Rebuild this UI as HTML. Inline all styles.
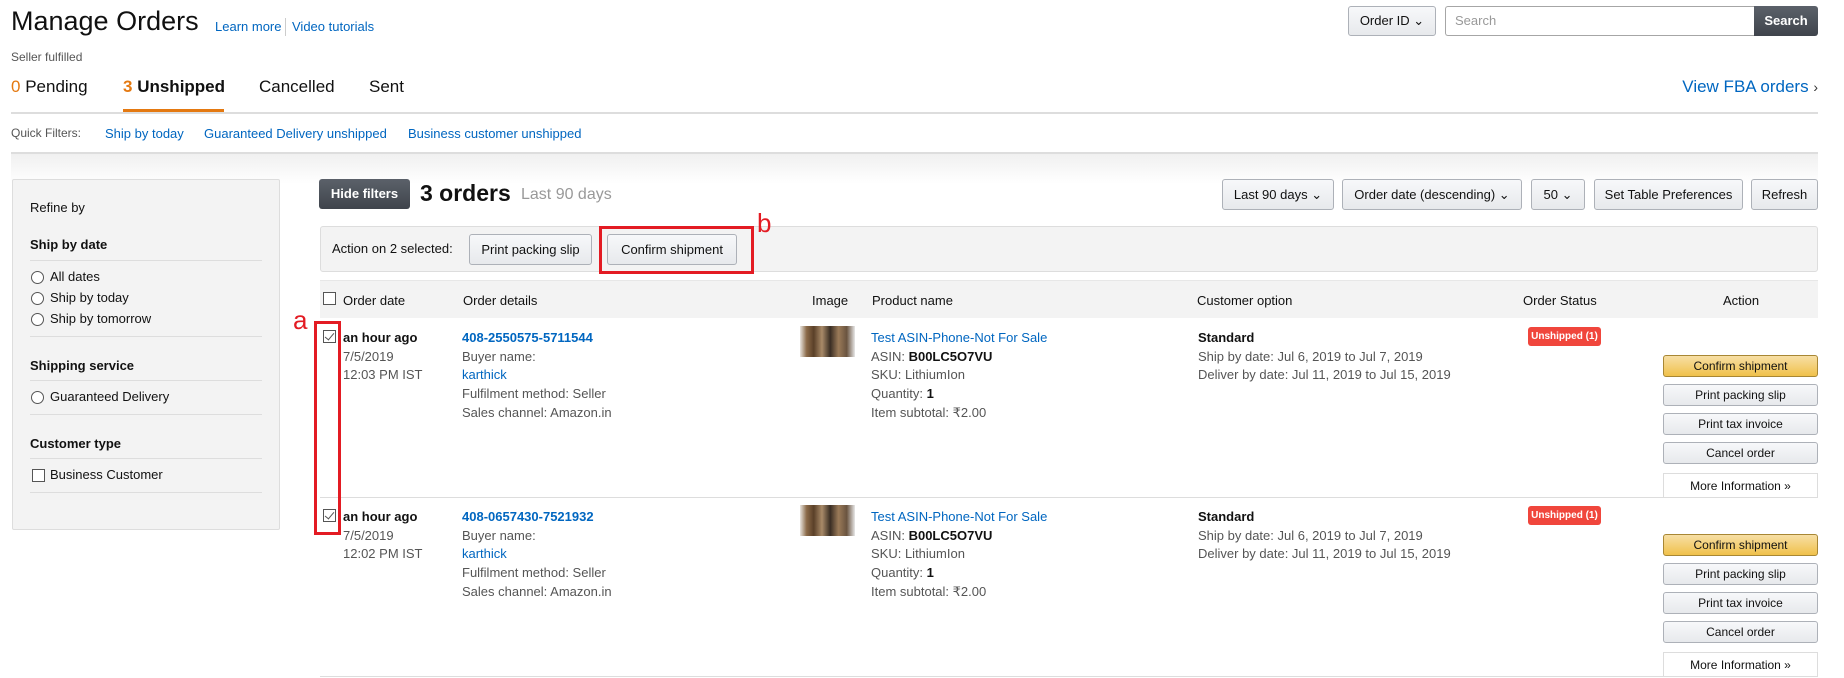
<!DOCTYPE html>
<html><head><meta charset="utf-8"><style>
*{margin:0;padding:0;box-sizing:border-box}
body{width:1844px;height:678px;overflow:hidden;background:#fff;font-family:"Liberation Sans",sans-serif;color:#111;position:relative;font-size:13px}
.a{position:absolute;white-space:nowrap}
.bl{color:#0066c0}
.g{color:#555}
.btn{position:absolute;border:1px solid #adb1b8;border-radius:3px;background:linear-gradient(#f7f8fa,#e7e9ec);font-size:13px;text-align:center;color:#111;white-space:nowrap}
.ln{position:absolute;height:1px;background:#ddd}
.rad{position:absolute;width:13px;height:13px;border:1px solid #555;border-radius:50%;background:#fff}
.cb{position:absolute;width:13px;height:13px;border:1px solid #555;background:#fff}
.cb.c::after{content:"";position:absolute;left:3px;top:0px;width:4px;height:8px;border:solid #555;border-width:0 1.5px 1.5px 0;transform:rotate(40deg)}
.y{background:linear-gradient(#f7dfa5,#f0c14b);border-color:#a88734}
.badge{position:absolute;background:#f0463c;color:#fff;font-weight:bold;font-size:10px;border-radius:3px;text-align:center;line-height:19px}
.thumb{position:absolute;width:55px;height:31px;background:linear-gradient(90deg,#e8e4de 0,#8b6a48 12%,#5a4028 25%,#a88a68 40%,#3a2e24 55%,#9a7a58 70%,#6a5440 85%,#e8e8e8 100%)}
.r{line-height:18.7px}
</style></head><body>
<div class="a" style="left:11px;top:6px;font-size:27px;color:#111">Manage Orders</div>
<div class="a bl" style="left:215px;top:19px;font-size:13px">Learn more</div>
<div style="position:absolute;left:285px;top:18px;width:1px;height:18px;background:#ccc"></div>
<div class="a bl" style="left:292px;top:19px;font-size:13px">Video tutorials</div>
<div class="a g" style="left:11px;top:50px;font-size:12px">Seller fulfilled</div>

<div class="btn" style="left:1348px;top:6px;width:88px;height:30px;line-height:28px">Order ID &#8964;</div>
<div style="position:absolute;left:1445px;top:6px;width:310px;height:30px;border:1px solid #a6a6a6;border-right:none;border-radius:3px 0 0 3px"></div>
<div class="a" style="left:1455px;top:13px;color:#999;font-size:13px">Search</div>
<div class="a" style="left:1754px;top:6px;width:64px;height:30px;background:linear-gradient(#5b616a,#3f444c);color:#fff;font-weight:bold;text-align:center;line-height:30px;border-radius:0 3px 3px 0">Search</div>

<div class="a" style="left:11px;top:77px;font-size:17px"><span style="color:#e47911">0</span> Pending</div>
<div class="a" style="left:123px;top:77px;font-size:17px;font-weight:bold"><span style="color:#e47911">3</span> Unshipped</div>
<div style="position:absolute;left:123px;top:109px;width:101px;height:3px;background:#e47911"></div>
<div class="a" style="left:259px;top:77px;font-size:17px">Cancelled</div>
<div class="a" style="left:369px;top:77px;font-size:17px">Sent</div>
<div class="a bl" style="right:26px;top:77px;font-size:17px">View FBA orders <span style="font-size:14px;color:#333">&#8250;</span></div>
<div style="position:absolute;left:11px;top:112px;width:1807px;height:2px;background:#ddd"></div>

<div class="a g" style="left:11px;top:126px;font-size:12px">Quick Filters:</div>
<div class="a bl" style="left:105px;top:126px;font-size:13px">Ship by today</div>
<div class="a bl" style="left:204px;top:126px;font-size:13px">Guaranteed Delivery unshipped</div>
<div class="a bl" style="left:408px;top:126px;font-size:13px">Business customer unshipped</div>
<div style="position:absolute;left:11px;top:152px;width:1807px;height:2px;background:#ddd"></div>
<div style="position:absolute;left:11px;top:154px;width:1807px;height:30px;background:linear-gradient(#f0f0f0,#fff)"></div>

<div style="position:absolute;left:12px;top:179px;width:268px;height:351px;background:#f3f3f3;border:1px solid #ddd;border-radius:2px"></div>
<div class="a" style="left:30px;top:200px;font-size:13px">Refine by</div>
<div class="a" style="left:30px;top:237px;font-weight:bold">Ship by date</div>
<div class="ln" style="left:30px;top:260px;width:232px"></div>
<div class="rad" style="left:31px;top:271px"></div><div class="a" style="left:50px;top:269px">All dates</div>
<div class="rad" style="left:31px;top:292px"></div><div class="a" style="left:50px;top:290px">Ship by today</div>
<div class="rad" style="left:31px;top:313px"></div><div class="a" style="left:50px;top:311px">Ship by tomorrow</div>
<div class="ln" style="left:30px;top:336px;width:232px"></div>
<div class="a" style="left:30px;top:358px;font-weight:bold">Shipping service</div>
<div class="ln" style="left:30px;top:380px;width:232px"></div>
<div class="rad" style="left:31px;top:391px"></div><div class="a" style="left:50px;top:389px">Guaranteed Delivery</div>
<div class="ln" style="left:30px;top:414px;width:232px"></div>
<div class="a" style="left:30px;top:436px;font-weight:bold">Customer type</div>
<div class="ln" style="left:30px;top:458px;width:232px"></div>
<div class="cb" style="left:32px;top:469px"></div><div class="a" style="left:50px;top:467px">Business Customer</div>
<div class="ln" style="left:30px;top:492px;width:232px"></div>

<div class="a" style="left:319px;top:179px;width:91px;height:30px;background:linear-gradient(#5b616a,#3f444c);border-radius:3px;color:#fff;font-weight:bold;text-align:center;line-height:30px;font-size:13px">Hide filters</div>
<div class="a" style="left:420px;top:180px;font-size:23px;font-weight:bold">3 orders</div>
<div class="a" style="left:521px;top:186px;font-size:16px;color:#999">Last 90 days</div>

<div class="btn" style="left:1222px;top:179px;width:112px;height:31px;line-height:29px">Last 90 days &#8964;</div>
<div class="btn" style="left:1342px;top:179px;width:180px;height:31px;line-height:29px">Order date (descending) &#8964;</div>
<div class="btn" style="left:1531px;top:179px;width:54px;height:31px;line-height:29px">50 &#8964;</div>
<div class="btn" style="left:1594px;top:179px;width:149px;height:31px;line-height:29px">Set Table Preferences</div>
<div class="btn" style="left:1751px;top:179px;width:67px;height:31px;line-height:29px">Refresh</div>

<div style="position:absolute;left:320px;top:226px;width:1498px;height:46px;background:#f3f3f3;border:1px solid #ddd;border-radius:3px"></div>
<div class="a" style="left:332px;top:241px">Action on 2 selected:</div>
<div class="btn" style="left:469px;top:234px;width:123px;height:31px;line-height:29px">Print packing slip</div>
<div class="btn" style="left:607px;top:234px;width:130px;height:31px;line-height:29px">Confirm shipment</div>
<div style="position:absolute;left:599px;top:226px;width:155px;height:48px;border:3px solid #e31b23"></div>
<div class="a" style="left:757px;top:208px;font-size:26px;color:#e31b23">b</div>

<div style="position:absolute;left:320px;top:280px;width:1498px;height:38px;background:#f3f3f3;border-top:1px solid #e7e7e7"></div>
<div class="cb" style="left:323px;top:292px"></div>
<div class="a" style="left:343px;top:293px">Order date</div>
<div class="a" style="left:463px;top:293px">Order details</div>
<div class="a" style="left:812px;top:293px">Image</div>
<div class="a" style="left:872px;top:293px">Product name</div>
<div class="a" style="left:1197px;top:293px">Customer option</div>
<div class="a" style="left:1523px;top:293px">Order Status</div>
<div class="a" style="left:1723px;top:293px">Action</div>

<!-- row 1 -->
<div class="cb c" style="left:323px;top:330px"></div>
<div class="a r" style="left:343px;top:329px;font-weight:bold">an hour ago<br><span class="g" style="font-weight:normal">7/5/2019<br>12:03 PM IST</span></div>
<div class="a g r" style="left:462px;top:329px"><b class="bl">408-2550575-5711544</b><br>Buyer name:<br><span class="bl">karthick</span><br>Fulfilment method: Seller<br>Sales channel: Amazon.in</div>
<div class="thumb" style="left:800px;top:326px"></div>
<div class="a g r" style="left:871px;top:329px"><span class="bl">Test ASIN-Phone-Not For Sale</span><br>ASIN: <b style="color:#111">B00LC5O7VU</b><br>SKU: LithiumIon<br>Quantity: <b style="color:#111">1</b><br>Item subtotal: ₹2.00</div>
<div class="a g r" style="left:1198px;top:329px"><b style="color:#111">Standard</b><br>Ship by date: Jul 6, 2019 to Jul 7, 2019<br>Deliver by date: Jul 11, 2019 to Jul 15, 2019</div>
<div class="badge" style="left:1528px;top:327px;width:73px;height:19px">Unshipped (1)</div>
<div class="btn y" style="left:1663px;top:355px;width:155px;height:22px;line-height:20px;font-size:12px">Confirm shipment</div>
<div class="btn" style="left:1663px;top:384px;width:155px;height:22px;line-height:20px;font-size:12px">Print packing slip</div>
<div class="btn" style="left:1663px;top:413px;width:155px;height:22px;line-height:20px;font-size:12px">Print tax invoice</div>
<div class="btn" style="left:1663px;top:442px;width:155px;height:22px;line-height:20px;font-size:12px">Cancel order</div>
<div class="a" style="left:1663px;top:473px;width:155px;height:24px;border:1px solid #ddd;border-bottom:none;text-align:center;line-height:24px;font-size:12px">More Information &#187;</div>
<div class="ln" style="left:320px;top:497px;width:1498px"></div>

<!-- row 2 -->
<div class="cb c" style="left:323px;top:509px"></div>
<div class="a r" style="left:343px;top:508px;font-weight:bold">an hour ago<br><span class="g" style="font-weight:normal">7/5/2019<br>12:02 PM IST</span></div>
<div class="a g r" style="left:462px;top:508px"><b class="bl">408-0657430-7521932</b><br>Buyer name:<br><span class="bl">karthick</span><br>Fulfilment method: Seller<br>Sales channel: Amazon.in</div>
<div class="thumb" style="left:800px;top:505px"></div>
<div class="a g r" style="left:871px;top:508px"><span class="bl">Test ASIN-Phone-Not For Sale</span><br>ASIN: <b style="color:#111">B00LC5O7VU</b><br>SKU: LithiumIon<br>Quantity: <b style="color:#111">1</b><br>Item subtotal: ₹2.00</div>
<div class="a g r" style="left:1198px;top:508px"><b style="color:#111">Standard</b><br>Ship by date: Jul 6, 2019 to Jul 7, 2019<br>Deliver by date: Jul 11, 2019 to Jul 15, 2019</div>
<div class="badge" style="left:1528px;top:506px;width:73px;height:19px">Unshipped (1)</div>
<div class="btn y" style="left:1663px;top:534px;width:155px;height:22px;line-height:20px;font-size:12px">Confirm shipment</div>
<div class="btn" style="left:1663px;top:563px;width:155px;height:22px;line-height:20px;font-size:12px">Print packing slip</div>
<div class="btn" style="left:1663px;top:592px;width:155px;height:22px;line-height:20px;font-size:12px">Print tax invoice</div>
<div class="btn" style="left:1663px;top:621px;width:155px;height:22px;line-height:20px;font-size:12px">Cancel order</div>
<div class="a" style="left:1663px;top:652px;width:155px;height:24px;border:1px solid #ddd;border-bottom:none;text-align:center;line-height:24px;font-size:12px">More Information &#187;</div>
<div class="ln" style="left:320px;top:676px;width:1498px"></div>

<div style="position:absolute;left:314px;top:321px;width:27px;height:214px;border:3px solid #e31b23"></div>
<div class="a" style="left:293px;top:305px;font-size:26px;color:#e31b23">a</div>
</body></html>
